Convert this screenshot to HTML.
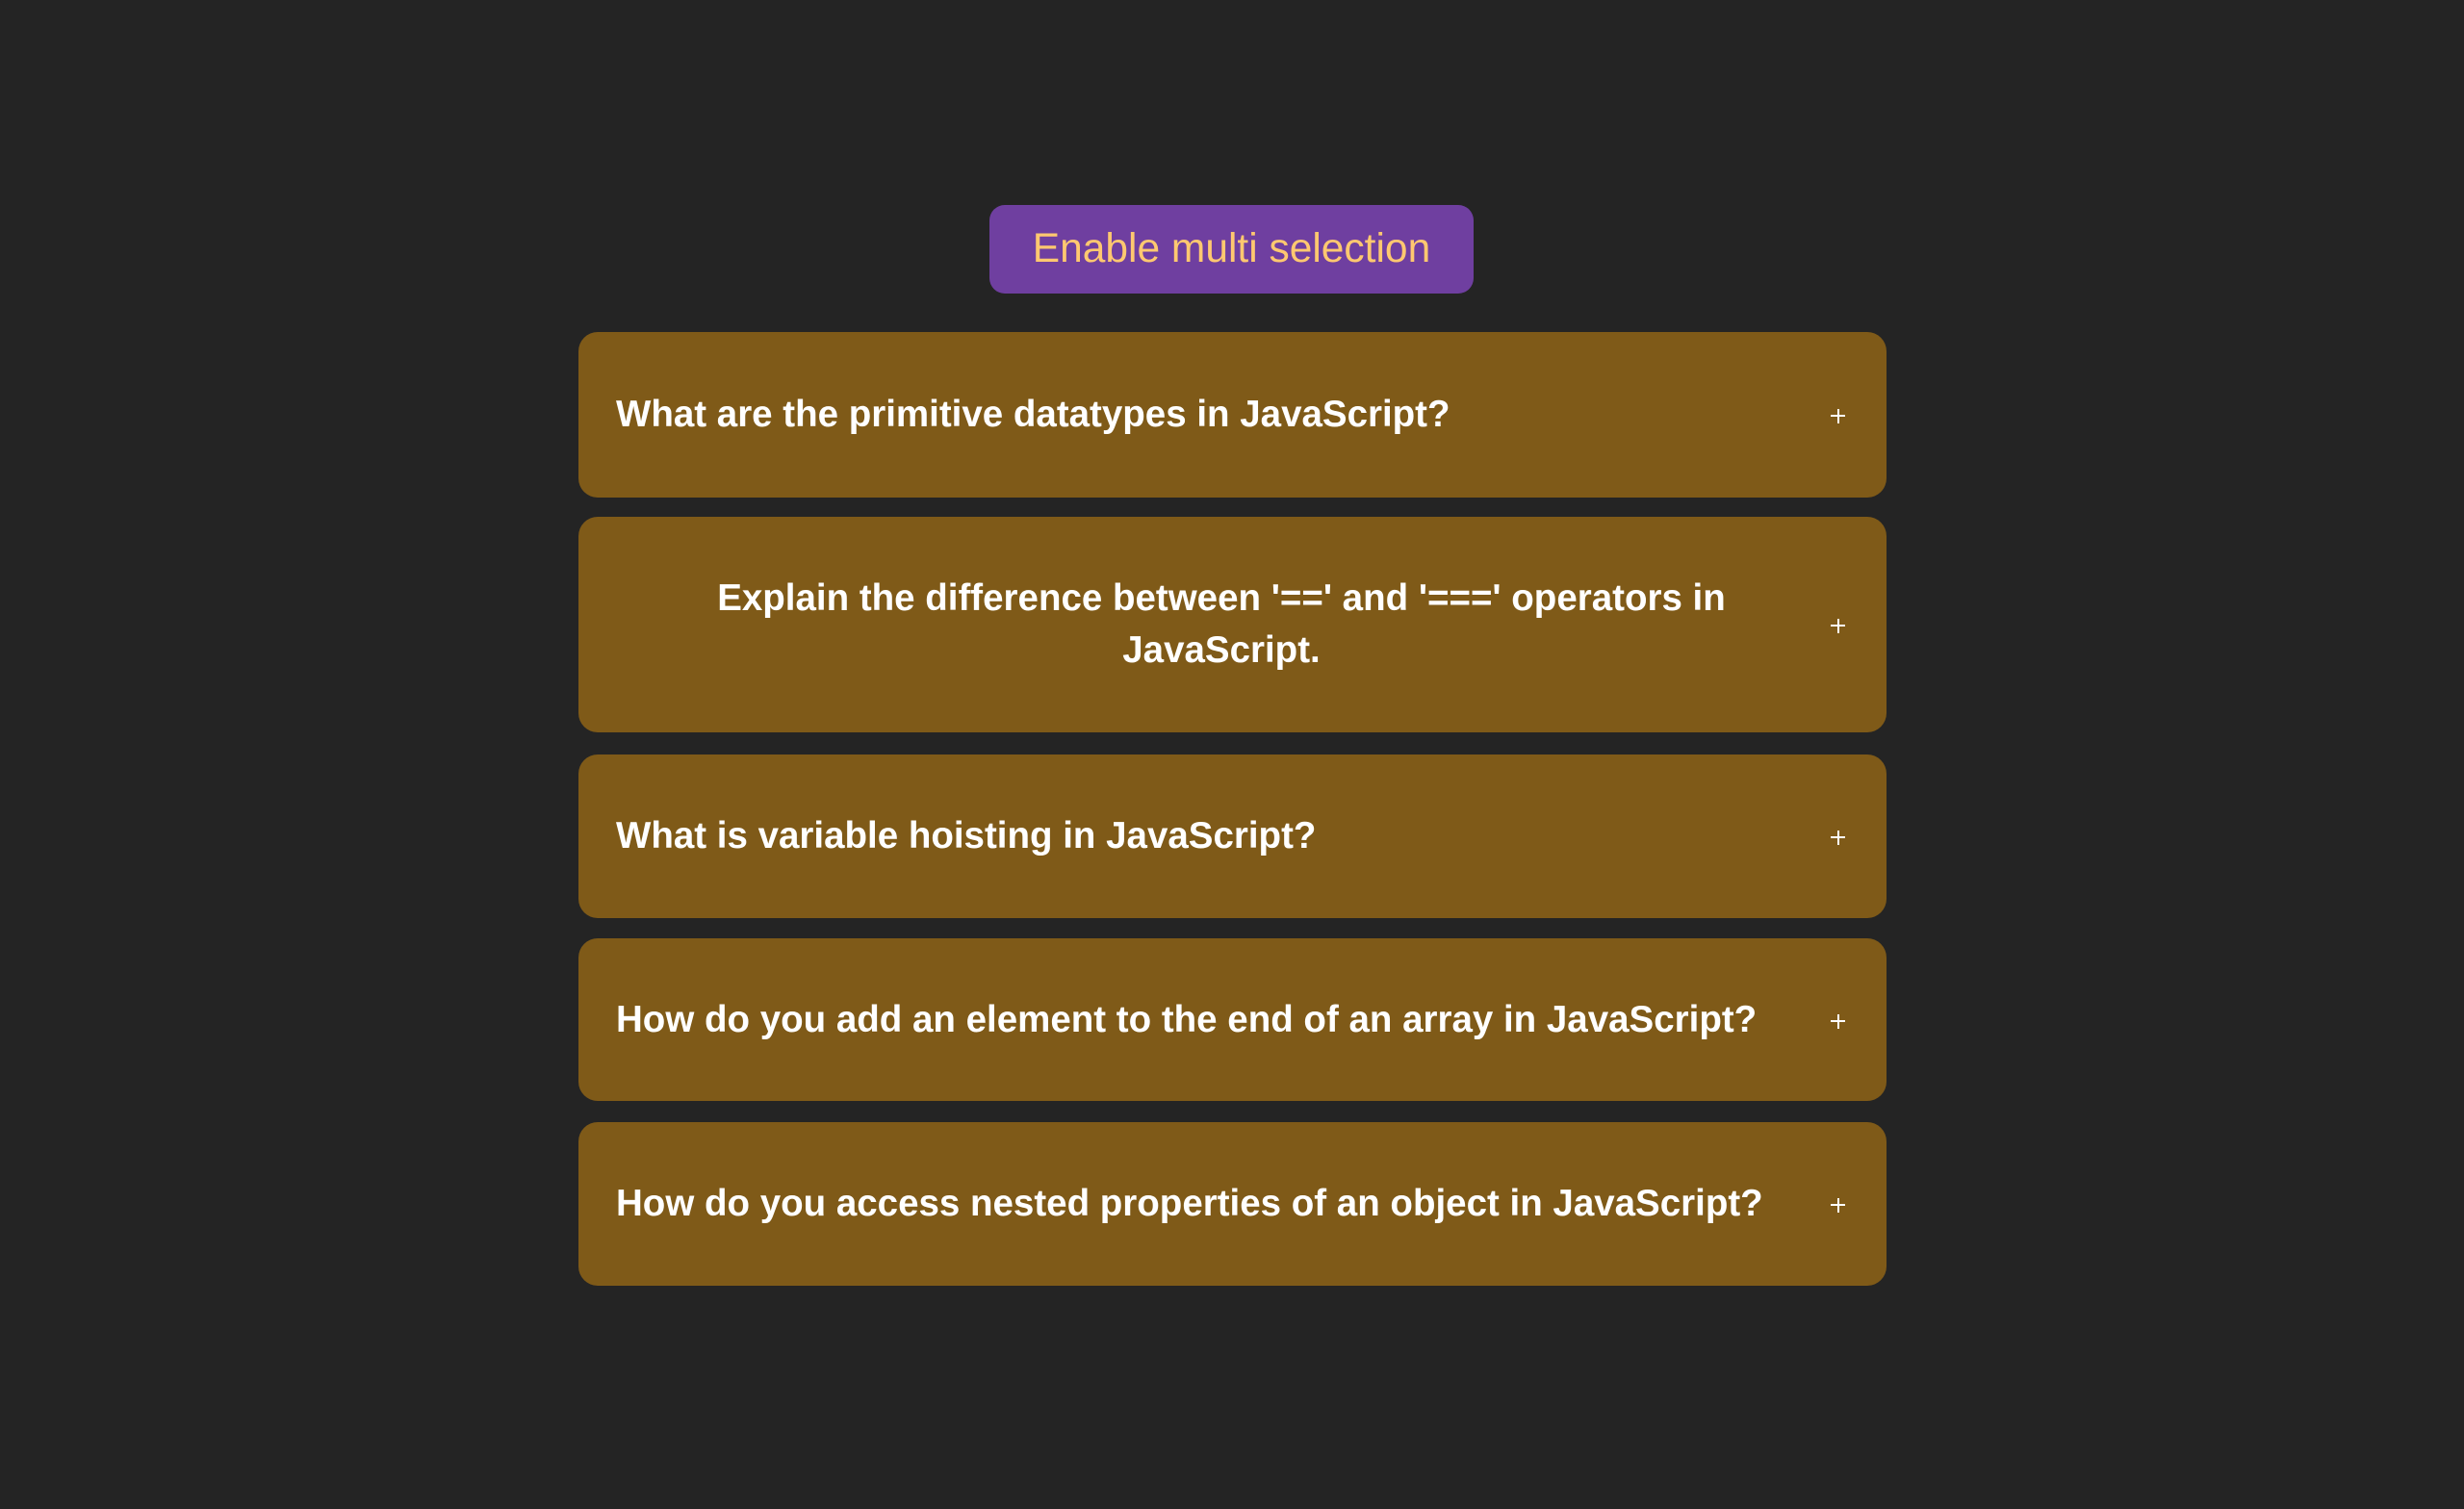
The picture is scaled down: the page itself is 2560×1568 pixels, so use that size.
<!DOCTYPE html>
<html><head><meta charset="utf-8"><style>
html,body{margin:0;padding:0;background:#242424;width:2560px;height:1568px;overflow:hidden;font-family:"Liberation Sans",sans-serif}
.btn{position:absolute;left:1028px;top:213px;width:503px;height:92px;background:#6f3fa0;border-radius:16px;color:#ffc870;font-size:42.5px;display:flex;align-items:center;justify-content:center}
.item{position:absolute;left:601px;width:1359px;background:#7f5a18;border-radius:20px;color:#fff}
.q{position:absolute;left:39px;top:0;bottom:0;display:flex;align-items:center;font-weight:bold;font-size:38.5px;line-height:54px;white-space:nowrap}
.p{position:absolute;left:1301px;top:50%;width:15px;height:15px;margin-top:-6px}
.p:before{content:"";position:absolute;left:0;top:6px;width:15px;height:2px;background:#fff}
.p:after{content:"";position:absolute;left:6.5px;top:0;width:2px;height:15px;background:#fff}
</style></head><body>
<div class="btn">Enable multi selection</div>
<div class="item" style="top:345px;height:172px"><div class="q">What are the primitive datatypes in JavaScript?</div><div class="p"></div></div>
<div class="item" style="top:537px;height:224px"><div class="q" style="width:1258px;justify-content:center;text-align:center">Explain the difference between '==' and '===' operators in<br>JavaScript.</div><div class="p"></div></div>
<div class="item" style="top:784px;height:170px"><div class="q">What is variable hoisting in JavaScript?</div><div class="p"></div></div>
<div class="item" style="top:975px;height:169px"><div class="q">How do you add an element to the end of an array in JavaScript?</div><div class="p"></div></div>
<div class="item" style="top:1166px;height:170px"><div class="q">How do you access nested properties of an object in JavaScript?</div><div class="p"></div></div>
</body></html>
